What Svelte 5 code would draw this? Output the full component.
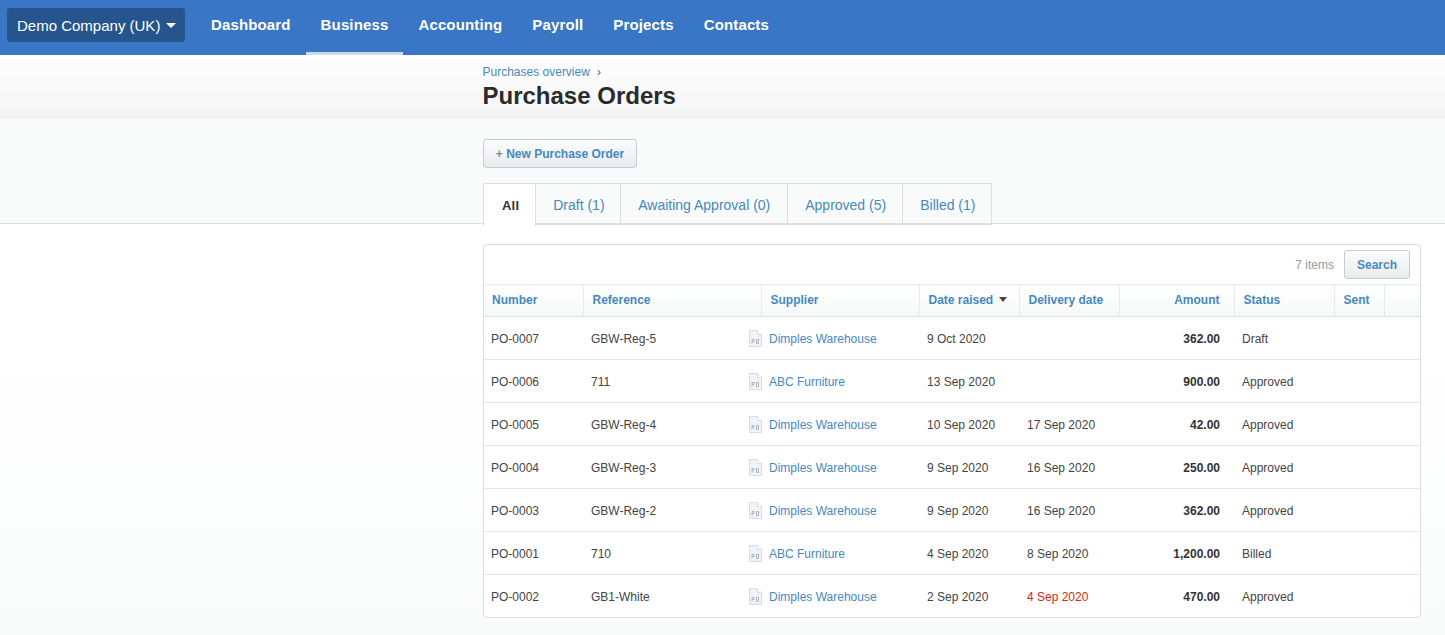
<script>
	const navItems = [
		{ title: 'Dashboard' },
		{ title: 'Business', active: true },
		{ title: 'Accounting' },
		{ title: 'Payroll' },
		{ title: 'Projects' },
		{ title: 'Contacts' }
	];

	const tabs = ['All', 'Draft (1)', 'Awaiting Approval (0)', 'Approved (5)', 'Billed (1)'];

	const orders = [
		{ number: 'PO-0007', reference: 'GBW-Reg-5', supplier: 'Dimples Warehouse', raised: '9 Oct 2020', delivery: '', amount: '362.00', status: 'Draft' },
		{ number: 'PO-0006', reference: '711', supplier: 'ABC Furniture', raised: '13 Sep 2020', delivery: '', amount: '900.00', status: 'Approved' },
		{ number: 'PO-0005', reference: 'GBW-Reg-4', supplier: 'Dimples Warehouse', raised: '10 Sep 2020', delivery: '17 Sep 2020', amount: '42.00', status: 'Approved' },
		{ number: 'PO-0004', reference: 'GBW-Reg-3', supplier: 'Dimples Warehouse', raised: '9 Sep 2020', delivery: '16 Sep 2020', amount: '250.00', status: 'Approved' },
		{ number: 'PO-0003', reference: 'GBW-Reg-2', supplier: 'Dimples Warehouse', raised: '9 Sep 2020', delivery: '16 Sep 2020', amount: '362.00', status: 'Approved' },
		{ number: 'PO-0001', reference: '710', supplier: 'ABC Furniture', raised: '4 Sep 2020', delivery: '8 Sep 2020', amount: '1,200.00', status: 'Billed' },
		{ number: 'PO-0002', reference: 'GB1-White', supplier: 'Dimples Warehouse', raised: '2 Sep 2020', delivery: '4 Sep 2020', overdue: true, amount: '470.00', status: 'Approved' }
	];
</script>

<header class="topbar">
	<button class="org">Demo Company (UK) <span class="caret"></span></button>
	<nav class="nav">
		{#each navItems as item}
			<a href="#top" class="nav-link" class:active={item.active}>{item.title}</a>
		{/each}
	</nav>
</header>

<div class="title-band">
	<div class="column">
		<div class="crumbs"><a href="#top">Purchases overview</a><span class="sep">›</span></div>
		<h1>Purchase Orders</h1>
	</div>
</div>

<main class="page">
	<div class="actions">
		<div class="column">
			<button class="btn new-order"><span class="plus">+</span> New Purchase Order</button>
			<ul class="tabs">
				{#each tabs as tab, i}
					<li class="tab" class:current={i === 0}><a href="#top">{tab}</a></li>
				{/each}
			</ul>
		</div>
	</div>

	<div class="column">
		<section class="panel">
			<div class="toolbar">
				<span class="count">7 items</span>
				<button class="btn search">Search</button>
			</div>
			<table>
				<colgroup>
					<col style="width: 99px" />
					<col style="width: 178px" />
					<col style="width: 158px" />
					<col style="width: 100px" />
					<col style="width: 100px" />
					<col style="width: 115px" />
					<col style="width: 100px" />
					<col style="width: 50px" />
					<col />
				</colgroup>
				<thead>
					<tr>
						<th class="first">Number</th>
						<th>Reference</th>
						<th>Supplier</th>
						<th>Date raised <span class="sort"></span></th>
						<th>Delivery date</th>
						<th class="num">Amount</th>
						<th>Status</th>
						<th>Sent</th>
						<th></th>
					</tr>
				</thead>
				<tbody>
					{#each orders as order}
						<tr>
							<td class="first">{order.number}</td>
							<td class="ref">
								{order.reference}
								<svg class="doc" width="13" height="17" viewBox="0 0 13 17" aria-hidden="true">
									<path d="M.5.5h8l4 4v12H.5z" fill="#f1f3f6" stroke="#d7dce2" />
									<path d="M8.5.5v4h4" fill="#fff" stroke="#d7dce2" />
									<path d="M3 13.5v-4h2v2H3M7.5 9.5h2v4h-2z" fill="none" stroke="#aab6c3" />
								</svg>
							</td>
							<td><a href="#top">{order.supplier}</a></td>
							<td>{order.raised}</td>
							<td class:overdue={order.overdue}>{order.delivery}</td>
							<td class="num amount">{order.amount}</td>
							<td>{order.status}</td>
							<td></td>
							<td></td>
						</tr>
					{/each}
				</tbody>
			</table>
		</section>
	</div>
</main>

<style>
	:global(body) {
		margin: 0;
		font-family: "Liberation Sans", Arial, sans-serif;
		font-size: 12px;
		color: #333;
		background: #f9fbfa;
	}

	a {
		color: #4589bf;
		text-decoration: none;
	}

	.topbar {
		height: 55px;
		box-sizing: border-box;
		background-color: #3a76c6;
		display: flex;
		align-items: flex-start;
		padding: 8px 0 0 7px;
	}

	.org {
		height: 34px;
		width: 178px;
		padding: 0 0 0 10px;
		border: none;
		border-radius: 3px;
		background-color: #26548c;
		color: #fff;
		font: 15px "Liberation Sans", Arial, sans-serif;
		text-align: left;
		white-space: nowrap;
	}

	.caret {
		display: inline-block;
		width: 0;
		height: 0;
		margin-left: 1px;
		vertical-align: 3px;
		border-left: 5px solid transparent;
		border-right: 5px solid transparent;
		border-top: 5px solid #fff;
	}

	.nav {
		display: flex;
		height: 47px;
		margin-left: 5px;
		margin-top: -8px;
	}

	.nav-link {
		padding: 0 15px;
		line-height: 50px;
		color: #fff;
		font-size: 15px;
		font-weight: bold;
		letter-spacing: 0.14px;
		border-bottom: 3px solid transparent;
		height: 52px;
	}

	.nav-link:first-child {
		margin-left: 6px;
	}

	.nav-link.active {
		border-bottom-color: #ccd9ef;
	}

	.title-band {
		height: 64px;
		background: linear-gradient(#fff, #f4f4f4);
	}

	.column {
		margin-left: 483px;
		width: 938px;
	}

	.crumbs {
		padding-top: 10px;
		line-height: 14px;
		margin-left: -0.5px;
	}

	.sep {
		margin-left: 7px;
		color: #666;
	}

	h1 {
		margin: 1px 0 0 -0.5px;
		font-size: 24px;
		line-height: 32px;
		font-weight: bold;
		color: #2b2b2b;
	}

	.page {
		background: linear-gradient(#fff 40%, #f9fbfa);
		padding-bottom: 18px;
	}

	.actions {
		background-color: #f9fbfa;
		border-bottom: 1px solid #dcdfe0;
		height: 105px;
		box-sizing: border-box;
		padding-top: 20px;
	}

	.actions .column {
		height: 84px;
	}

	.btn {
		border: 1px solid #c8ccd0;
		border-radius: 3px;
		background: linear-gradient(#fbfcfc, #e9ecef);
		color: #4589bf;
		font: bold 12px "Liberation Sans", Arial, sans-serif;
	}

	.new-order {
		display: block;
		width: 154px;
		height: 29px;
		padding: 0;
	}

	.plus {
		color: #6f8ba3;
	}

	.tabs {
		display: flex;
		list-style: none;
		margin: 15px 0 0;
		padding: 0;
		height: 42px;
	}

	.tab {
		box-sizing: border-box;
		height: 42px;
		border: 1px solid #dcdfe0;
		border-left: none;
		border-bottom: 2px solid #dcdfe0;
		background-color: #f9fbfa;
		line-height: 43px;
		padding-left: 17px;
		font-size: 14px;
		white-space: nowrap;
	}

	.tab:nth-child(2) {
		width: 85px;
	}

	.tab:nth-child(3) {
		width: 167px;
	}

	.tab:nth-child(4) {
		width: 115px;
	}

	.tab:nth-child(5) {
		width: 89px;
	}

	.tab.current {
		border-left: 1px solid #dcdfe0;
		border-bottom: none;
		height: 43px;
		background-color: #fff;
		font-size: 13px;
		font-weight: bold;
		letter-spacing: 0.2px;
		padding: 0 16px 0 18px;
	}

	.tab.current a {
		color: #333;
	}

	.panel {
		margin-top: 20px;
		box-sizing: border-box;
		background-color: #fff;
		border: 1px solid #dcdfe0;
		border-radius: 3px;
	}

	.toolbar {
		height: 39px;
		box-sizing: border-box;
		display: flex;
		justify-content: flex-end;
		align-items: center;
		padding: 0 10px 0 0;
	}

	.count {
		color: #999;
		margin-right: 10px;
	}

	.search {
		width: 66px;
		height: 29px;
		padding: 0;
	}

	table {
		width: 100%;
		table-layout: fixed;
		border-collapse: collapse;
	}

	th {
		height: 32px;
		box-sizing: border-box;
		padding: 0 8px 2px 9px;
		text-align: left;
		color: #4589bf;
		font-weight: bold;
		background: linear-gradient(#fff, #f6f7f7);
		border-top: 1px solid #e8eaea;
		border-bottom: 1px solid #dcdfe0;
		border-right: 1px solid #e8eaea;
	}

	th:last-child {
		border-right: none;
	}

	th.first {
		padding-left: 8px;
	}

	td {
		height: 43px;
		box-sizing: border-box;
		padding: 2px 8px 0;
		border-bottom: 1px solid #e4e6e6;
		color: #444;
		white-space: nowrap;
	}

	td.first {
		padding-left: 7px;
	}

	tbody tr:last-child td {
		height: 42px;
		padding-top: 3px;
		border-bottom: none;
	}

	td.ref {
		position: relative;
	}

	.doc {
		position: absolute;
		right: -1px;
		top: 13px;
	}

	th.num,
	td.num {
		text-align: right;
		padding-right: 14px;
	}

	td.amount {
		font-weight: bold;
		color: #333;
	}

	td.overdue {
		color: #d4290f;
	}

	.sort {
		display: inline-block;
		width: 0;
		height: 0;
		margin-left: 2px;
		vertical-align: 2px;
		border-left: 4px solid transparent;
		border-right: 4px solid transparent;
		border-top: 5px solid #444;
	}
</style>
